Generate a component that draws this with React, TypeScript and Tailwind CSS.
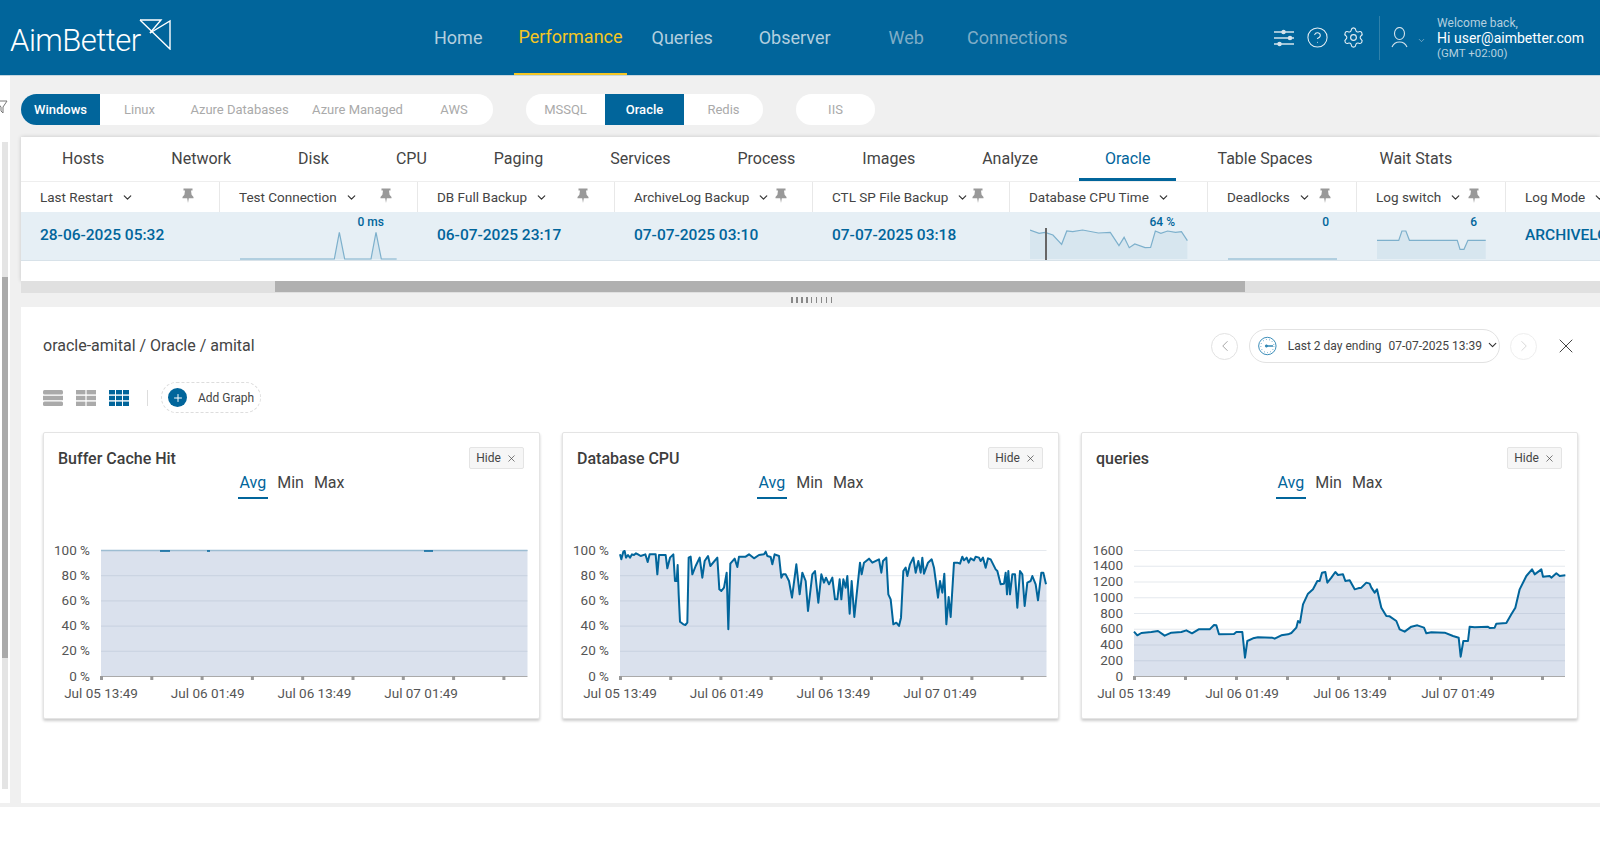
import React from "react";
import { ChevronDown, ChevronLeft, ChevronRight, CircleHelp, Settings, X, Plus } from "lucide-react";

type P = [number, number];
const cpu: P[] = [[208,90],[212,105],[218,82],[222,80],[226,100],[232,92],[238,100],[244,90],[250,92],[256,87],[262,90],[270,95],[284,90],[291,113],[297,90],[315,90],[320,150],[325,92],[345,92],[350,132],[358,100],[368,90],[373,170],[378,170],[381,122],[384,210],[388,292],[398,300],[404,302],[410,295],[414,100],[420,97],[425,150],[435,125],[447,100],[455,160],[462,110],[472,95],[479,125],[500,100],[506,195],[512,200],[520,190],[528,145],[533,315],[539,118],[552,103],[560,128],[565,97],[585,97],[595,90],[610,102],[625,92],[640,90],[645,82],[650,95],[660,98],[665,120],[672,90],[685,95],[692,160],[697,150],[705,150],[715,170],[724,220],[737,120],[747,210],[755,145],[765,170],[772,260],[785,150],[793,140],[803,235],[812,150],[820,175],[826,160],[835,180],[845,160],[853,225],[860,225],[867,165],[872,225],[878,165],[885,190],[890,155],[897,268],[903,170],[911,278],[917,220],[928,115],[933,150],[940,115],[955,103],[965,115],[985,105],[992,145],[997,110],[1007,100],[1013,210],[1020,225],[1028,300],[1037,295],[1045,305],[1051,280],[1058,140],[1065,130],[1070,155],[1078,120],[1088,100],[1095,145],[1103,110],[1110,145],[1115,100],[1120,148],[1132,115],[1143,105],[1150,130],[1162,220],[1168,170],[1175,205],[1181,148],[1187,300],[1194,218],[1200,278],[1210,115],[1220,115],[1228,118],[1235,97],[1240,108],[1248,100],[1254,115],[1260,102],[1270,108],[1275,97],[1285,100],[1290,110],[1297,100],[1305,130],[1312,102],[1320,105],[1335,135],[1340,140],[1350,180],[1360,178],[1365,145],[1369,210],[1373,140],[1378,210],[1385,150],[1393,150],[1400,250],[1408,140],[1415,150],[1422,245],[1430,175],[1440,170],[1445,155],[1455,180],[1462,228],[1472,145],[1478,145],[1486,180]];
const queries: P[] = [[218,322],[228,333],[240,326],[270,323],[290,320],[310,334],[330,325],[360,323],[375,318],[392,327],[412,315],[445,315],[458,302],[465,303],[473,330],[518,329],[525,323],[543,323],[551,400],[558,350],[575,342],[590,339],[632,340],[640,343],[660,333],[680,330],[690,326],[705,310],[710,290],[716,295],[725,240],[740,208],[755,195],[768,170],[775,170],[782,145],[792,143],[798,175],[810,160],[822,143],[830,152],[845,150],[852,170],[865,168],[880,195],[890,192],[900,190],[915,175],[925,178],[930,190],[940,205],[947,195],[960,250],[975,275],[985,276],[1005,290],[1015,315],[1030,322],[1050,307],[1068,303],[1088,310],[1095,327],[1110,324],[1150,325],[1175,335],[1192,340],[1198,397],[1206,350],[1220,350],[1225,307],[1240,309],[1280,307],[1285,311],[1300,310],[1305,298],[1335,296],[1350,270],[1362,250],[1375,195],[1395,155],[1412,135],[1420,150],[1440,135],[1445,157],[1465,155],[1470,160],[1485,147],[1495,155],[1512,153]];

const Pin = () => (
  <svg width="12" height="15" viewBox="0 0 12 15" className="mt-[-1px] shrink-0">
    <path d="M1.5 0.5h9v2H9l.6 4.2L11.5 9v1.2H6.8L6 15l-.8-4.8H.5V9l1.9-2.3L3 2.5H1.5z" fill="#999" />
  </svg>
);

function Head({ w, label, pin = true, last = false }: { w: string; label: string; pin?: boolean; last?: boolean }) {
  return (
    <div className={`${w} shrink-0 h-full pl-[19px] pt-[7px] flex items-start justify-between pr-[25px] ${last ? "" : "border-r border-[#e8e8e8]"}`}>
      <div className="flex items-center gap-[8px] text-[13.5px] leading-[16px] text-[#444] whitespace-nowrap">
        {label}
        <ChevronDown size={13} strokeWidth={2.2} color="#333" />
      </div>
      {pin && <Pin />}
    </div>
  );
}

function Value({ w, text }: { w: string; text: string }) {
  return (
    <div className={`${w} shrink-0 pl-[19px] flex items-center text-[15.5px] font-medium text-[#01659b] whitespace-nowrap`}>{text}</div>
  );
}

function Spark({ w, sw, label, right, pts, fill = true, cursor }: { w: string; sw: number; label: string; right: string; pts: P[]; fill?: boolean; cursor?: number }) {
  const line = pts.map((p) => p.join(",")).join(" ");
  const area = `${pts[0][0]},31 ${line} ${pts[pts.length - 1][0]},31`;
  return (
    <div className={`${w} shrink-0 pt-[4px] flex flex-col`}>
      <div className={`${right} text-right text-[12px] leading-[12px] font-medium text-[#01659b]`}>{label}</div>
      <svg width={sw} height="32" className="ml-[20px] block">
        {fill && <polygon points={area} fill="#d7e6ef" />}
        <polyline points={line} fill="none" stroke="#7db0cc" strokeWidth="1.2" />
        {cursor !== undefined && <rect x={cursor} y="-1" width="2" height="33" fill="#666" />}
      </svg>
    </div>
  );
}

const sCpu: P[] = [[127,165],[150,175],[165,172],[185,180],[207,208],[220,168],[235,170],[260,165],[300,174],[330,172],[352,212],[365,187],[378,218],[392,207],[418,218],[432,217],[444,168],[458,175],[475,168],[495,172],[510,170],[525,197]].map(([x, y]) => [(x - 127) / 2.529, y / 3 - 53] as P);
const sLog: P[] = [[1005,196],[1060,196],[1068,168],[1078,168],[1087,196],[1208,196],[1215,223],[1225,223],[1235,196],[1280,196]].map(([x, y]) => [(x - 1005) / 2.529, y / 3 - 53] as P);
const sConn: P[] = [[720,252],[1003,252],[1018,172],[1034,252],[1113,252],[1128,172],[1144,252],[1190,252]].map(([x, y]) => [(x - 720) / 3, y / 3 - 53] as P);
const sDead: P[] = [[0, 31], [109, 31]];

function Chart({ title, left, width, yLabels, data, x0, scale, labelStep, tickStep }: { title: string; left: number; width: number; yLabels: string[]; data?: P[]; x0: number; scale: number; labelStep: number; tickStep: number }) {
  const H = 126;
  const top = 8;
  const pts = data ? data.map(([x, y]) => [(x - x0) / scale, (y - 77) / 3]) : [];
  const line = pts.map((p) => p.join(",")).join(" ");
  const step = H / (yLabels.length - 1);
  return (
    <div className="w-[497px] h-[287px] shrink-0 bg-white border border-[#e4e4e4] rounded-[2px] shadow-[0_2px_3px_rgba(0,0,0,0.2)]">
      <div className="flex items-start justify-between pl-[14px] pr-[15px] pt-[14px]">
        <div className="text-[16px] leading-[22px] font-medium text-[#3d3d3d] pt-[1px]">{title}</div>
        <div className="w-[55px] h-[22px] flex items-center justify-center gap-[5px] bg-[#f6f6f6] border border-[#e4e4e4] rounded-[2px] text-[12px] text-[#444]">
          Hide <X size={11} strokeWidth={1.5} color="#444" />
        </div>
      </div>
      <div className="flex justify-center gap-[8px] mt-[1px] text-[16px] leading-[20px] text-[#444]">
        <div className="px-[2px] pt-[2px] pb-[4px] text-[#01659b] border-b-2 border-[#01659b]">Avg</div>
        <div className="px-[1px] pt-[2px]">Min</div>
        <div className="px-[1px] pt-[2px]">Max</div>
      </div>
      <svg width="495" height="170" className="block mt-[43px]" style={{ fontFamily: "Roboto, sans-serif" }}>
        <g transform={`translate(${left},${top})`}>
          <polygon points={data ? `0,${H} ${line} ${width},${pts[pts.length - 1][1]} ${width},${H}` : `0,0 ${width},0 ${width},${H} 0,${H}`} fill="#dae1ed" />
          {yLabels.map((l, i) => (
            <g key={l}>
              <line x1="0" x2={width} y1={step * i + 0.5} y2={step * i + 0.5} stroke={i === yLabels.length - 1 ? "#aaa" : "#8a9cb0"} strokeOpacity={i === yLabels.length - 1 ? 1 : 0.22} />
              <text x="-11" y={step * i + 4.5} textAnchor="end" fontSize="13.5" fill="#555">{l}</text>
            </g>
          ))}
          {Array.from({ length: 9 }).map((_, i) => (
            <rect key={i} x={i * tickStep - 1} y={H} width="3" height="4" fill="#999" />
          ))}
          {["Jul 05 13:49", "Jul 06 01:49", "Jul 06 13:49", "Jul 07 01:49"].map((l, i) => (
            <text key={l} x={i * labelStep} y={H + 22} textAnchor="middle" fontSize="13.5" fill="#555">{l}</text>
          ))}
          {data ? (
            <polyline points={line} fill="none" stroke="#01659b" strokeWidth="2" strokeLinejoin="round" />
          ) : (
            <>
              <line x1="0" x2={width} y1="0.5" y2="0.5" stroke="#9dbdd2" strokeWidth="1.5" />
              <line x1="59" x2="69" y1="1" y2="1" stroke="#01659b" strokeWidth="1.5" />
              <line x1="106" x2="109" y1="1" y2="1" stroke="#01659b" strokeWidth="1.5" />
              <line x1="323" x2="332" y1="1" y2="1" stroke="#01659b" strokeWidth="1.5" />
            </>
          )}
        </g>
      </svg>
    </div>
  );
}

const pct = ["100 %", "80 %", "60 %", "40 %", "20 %", "0 %"];
const qLabels = ["1600", "1400", "1200", "1000", "800", "600", "400", "200", "0"];

const tabs = ["Hosts", "Network", "Disk", "CPU", "Paging", "Services", "Process", "Images", "Analyze", "Oracle", "Table Spaces", "Wait Stats"];

export default function App() {
  return (
    <div className="w-[1600px] h-[852px] overflow-hidden bg-white font-['Roboto',sans-serif]">
      {/* header */}
      <div className="h-[76px] bg-[#01659b] border-b border-[#c5d6e0] flex items-stretch text-white">
        <div className="w-[430px] shrink-0 flex items-center pl-[10px]">
          <span className="text-[31px] font-light leading-none tracking-[-0.5px] mt-[5px]">AimBetter</span>
          <svg width="32" height="32" viewBox="0 0 32 32" className="mb-[8px] -ml-[2px]" fill="none" stroke="white" strokeWidth="1.4">
            <path d="M1 2h21L11 15" />
            <path d="M1 2l30 29V3L11 15" />
          </svg>
        </div>
        <div className="ml-0 flex items-stretch text-[18px]">
          <div className="px-[4px] flex items-center text-[#b3cfdf]">Home</div>
          <div className="ml-[28px] px-[4px] flex items-center text-[#f5c623] border-b-2 border-[#f5c623]">Performance</div>
          <div className="ml-[21px] px-[4px] flex items-center text-[#b3cfdf]">Queries</div>
          <div className="ml-[38px] px-[4px] flex items-center text-[#b3cfdf]">Observer</div>
          <div className="ml-[50px] px-[4px] flex items-center text-[#7fadc7]">Web</div>
          <div className="ml-[35px] px-[4px] flex items-center text-[#7fadc7]">Connections</div>
        </div>
        <div className="ml-auto flex items-center pr-[16px]">
          <svg width="20" height="18" viewBox="0 0 20 18" fill="none" stroke="#d5e3ec" strokeWidth="1.3">
            <path d="M0 3h20M0 9h20M0 15h20" />
            <circle cx="9.5" cy="3" r="1.6" fill="#d5e3ec" />
            <circle cx="16" cy="9" r="1.6" fill="#d5e3ec" />
            <circle cx="5.5" cy="15" r="1.6" fill="#d5e3ec" />
          </svg>
          <CircleHelp size={23} strokeWidth={1.1} color="#e3edf3" className="ml-[12px]" />
          <Settings size={23} strokeWidth={1.2} color="#e3edf3" className="ml-[13px]" />
          <div className="w-px h-[44px] bg-[#2f81ab] ml-[14px]" />
          <svg width="17" height="21" viewBox="0 0 17 21" fill="none" stroke="#d5e3ec" strokeWidth="1.1" className="ml-[11px]">
            <ellipse cx="8.5" cy="6.5" rx="5" ry="6" />
            <path d="M1 20c1.5-3.5 4-5 7.5-5s6 1.5 7.5 5" />
          </svg>
          <ChevronDown size={9} strokeWidth={1.4} color="#c5d8e4" className="ml-[9px] mt-[6px]" />
          <div className="ml-[11px] flex flex-col whitespace-nowrap">
            <div className="text-[12px] leading-[15px] text-[#b3cfdf]">Welcome back,</div>
            <div className="text-[14px] leading-[15px] text-white">Hi user@aimbetter.com</div>
            <div className="text-[11.5px] leading-[14px] text-[#b3cfdf]">(GMT +02:00)</div>
          </div>
        </div>
      </div>

      <div className="h-[727px] flex">
        {/* peeking left sidebar */}
        <div className="w-[21px] shrink-0 flex">
          <div className="w-[10px] shrink-0 bg-white pt-[24px] pl-0">
            <svg width="8" height="14" viewBox="0 0 8 14" fill="none" stroke="#777" strokeWidth="1">
              <path d="M-4 1h11L3 7v6L1 11V7z" />
            </svg>
            <div className="ml-[2px] mt-[28px] w-[6px] h-[647px] bg-[#e4e4e4] pt-[135px]">
              <div className="h-[381px] bg-[#aaa]" />
            </div>
          </div>
          <div className="w-[11px] shrink-0 bg-[#f0f0f0]" />
        </div>

        <div className="w-[1579px] shrink-0 bg-[#f0f0f0] flex flex-col min-w-0">
          {/* pills */}
          <div className="h-[61px] shrink-0 pt-[18px] flex items-start gap-[33px] text-[13px] text-[#aaa]">
            <div className="h-[31px] flex items-stretch bg-white rounded-full overflow-hidden">
              <div className="w-[79px] flex items-center justify-center bg-[#01659b] text-white font-medium">Windows</div>
              <div className="w-[79px] flex items-center justify-center">Linux</div>
              <div className="w-[121px] flex items-center justify-center">Azure Databases</div>
              <div className="w-[115px] flex items-center justify-center">Azure Managed</div>
              <div className="w-[78px] flex items-center justify-center">AWS</div>
            </div>
            <div className="h-[31px] flex items-stretch bg-white rounded-full overflow-hidden">
              <div className="w-[79px] flex items-center justify-center">MSSQL</div>
              <div className="w-[79px] flex items-center justify-center bg-[#01659b] text-white font-medium">Oracle</div>
              <div className="w-[79px] flex items-center justify-center">Redis</div>
            </div>
            <div className="h-[31px] w-[79px] flex items-center justify-center bg-white rounded-full">IIS</div>
          </div>

          {/* table panel */}
          <div className="bg-white shadow-[0_0_4px_rgba(0,0,0,0.18)] shrink-0">
            <div className="h-[45px] flex items-stretch pl-[15px] gap-[15px] border-b border-[#eee] text-[16px] text-[#444]">
              {tabs.map((t) => (
                <div key={t} className={`px-[26px] flex items-center whitespace-nowrap ${t === "Oracle" ? "text-[#01659b] border-b-[3px] border-[#01659b] pt-[3px]" : ""}`}>{t}</div>
              ))}
            </div>
            <div className="h-[30px] flex overflow-hidden">
              <Head w="w-[199px]" label="Last Restart" />
              <Head w="w-[198px]" label="Test Connection" />
              <Head w="w-[197px]" label="DB Full Backup" />
              <Head w="w-[198px]" label="ArchiveLog Backup" />
              <Head w="w-[197px]" label="CTL SP File Backup" />
              <Head w="w-[198px]" label="Database CPU Time" pin={false} />
              <Head w="w-[149px]" label="Deadlocks" />
              <Head w="w-[149px]" label="Log switch" />
              <Head w="w-[200px]" label="Log Mode" pin={false} last />
            </div>
            <div className="h-[49px] flex overflow-hidden bg-[#e6eff5] border-b border-[#d8e2e9]">
              <Value w="w-[199px]" text="28-06-2025 05:32" />
              <Spark w="w-[198px]" sw={158} label="0 ms" right="pr-[34px]" pts={sConn} fill />
              <Value w="w-[197px]" text="06-07-2025 23:17" />
              <Value w="w-[198px]" text="07-07-2025 03:10" />
              <Value w="w-[197px]" text="07-07-2025 03:18" />
              <Spark w="w-[198px]" sw={158} label="64 %" right="pr-[33px]" pts={sCpu} cursor={15} />
              <Spark w="w-[149px]" sw={109} label="0" right="pr-[28px]" pts={sDead} fill={false} />
              <Spark w="w-[149px]" sw={109} label="6" right="pr-[29px]" pts={sLog} />
              <Value w="w-[200px]" text="ARCHIVELOG" />
            </div>
            <div className="h-[20px]" />
          </div>
          <div className="h-[12px] shrink-0 bg-[#e0e0e0]">
            <div className="ml-[254px] w-[970px] h-[11px] bg-[#b0b0b0]" />
          </div>
          <div className="h-[14px] shrink-0 flex items-center justify-center">
            <div className="w-[41px] h-[6px] mr-[-1px] bg-[repeating-linear-gradient(90deg,#888_0,#888_1.5px,transparent_1.5px,transparent_5px)]" />
          </div>

          {/* detail */}
          <div className="flex-1 bg-white pl-[22px] pr-[22px] pt-[22px]">
            <div className="h-[34px] flex items-center">
              <div className="text-[16px] text-[#444]">oracle-amital / Oracle / amital</div>
              <div className="ml-auto flex items-center">
                <div className="w-[27px] h-[27px] rounded-full border border-[#e2e2e2] flex items-center justify-center">
                  <ChevronLeft size={18} strokeWidth={1} color="#888" />
                </div>
                <div className="ml-[11px] w-[251px] h-[34px] rounded-full border border-[#e2e2e2] flex items-center pl-[8px] text-[#444] whitespace-nowrap">
                  <svg width="20" height="20" viewBox="0 0 20 20" fill="none" stroke="#2f86b4" strokeWidth="1">
                    <circle cx="10" cy="10" r="9.3" />
                    <circle cx="10" cy="10" r="7" strokeDasharray="0.8 2.6" />
                    <path d="M9 10h7" strokeWidth="1.6" />
                    <circle cx="9" cy="10" r="1.2" fill="#2f86b4" />
                  </svg>
                  <span className="ml-[11px] text-[12px]">Last 2 day ending</span>
                  <span className="ml-[7px] text-[12px] mb-[1px]">07-07-2025 13:39</span>
                  <ChevronDown size={14} strokeWidth={2} color="#333" className="ml-[4px] mb-[2px]" />
                </div>
                <div className="ml-[10px] w-[27px] h-[27px] rounded-full border border-[#eee] flex items-center justify-center">
                  <ChevronRight size={18} strokeWidth={1} color="#ccc" />
                </div>
                <X size={24} strokeWidth={1} color="#444" className="ml-[17px]" />
              </div>
            </div>

            <div className="mt-[19px] h-[31px] flex items-center">
              <svg width="20" height="16" viewBox="0 0 20 16" fill="#aaa">
                <rect width="20" height="4.4" rx="1.5" />
                <rect y="5.8" width="20" height="4.4" />
                <rect y="11.6" width="20" height="4.4" rx="1.5" />
              </svg>
              <svg width="20" height="16" viewBox="0 0 20 16" fill="#aaa" className="ml-[13px]">
                {[0, 5.8, 11.6].map((y) => (
                  <g key={y}>
                    <rect y={y} width="9.4" height="4.4" />
                    <rect x="10.6" y={y} width="9.4" height="4.4" />
                  </g>
                ))}
              </svg>
              <svg width="20" height="16" viewBox="0 0 20 16" fill="#01659b" className="ml-[13px]">
                {[0, 5.8, 11.6].map((y) => (
                  <g key={y}>
                    <rect y={y} width="6" height="4.4" />
                    <rect x="7" y={y} width="6" height="4.4" />
                    <rect x="14" y={y} width="6" height="4.4" />
                  </g>
                ))}
              </svg>
              <div className="ml-[18px] w-px h-[16px] bg-[#ddd]" />
              <div className="ml-[13px] w-[100px] h-[31px] rounded-full border border-dashed border-[#ddd] flex items-center pl-[6px]">
                <div className="w-[19px] h-[19px] rounded-full bg-[#01659b] flex items-center justify-center">
                  <Plus size={12} strokeWidth={2} color="white" />
                </div>
                <span className="ml-[11px] text-[12px] text-[#444] whitespace-nowrap">Add Graph</span>
              </div>
            </div>

            <div className="mt-[19px] flex gap-[22px]">
              <Chart title="Buffer Cache Hit" left={57} width={426.5} yLabels={pct} x0={208} scale={3} labelStep={106.7} tickStep={50.3} />
              <Chart title="Database CPU" left={57} width={426.5} yLabels={pct} data={cpu} x0={208} scale={3} labelStep={106.7} tickStep={50.2} />
              <Chart title="queries" left={52} width={431} yLabels={qLabels} data={queries} x0={218} scale={3} labelStep={108} tickStep={51} />
            </div>
          </div>
        </div>
      </div>
      <div className="h-[4px] bg-[#f0f0f0]" />
    </div>
  );
}
